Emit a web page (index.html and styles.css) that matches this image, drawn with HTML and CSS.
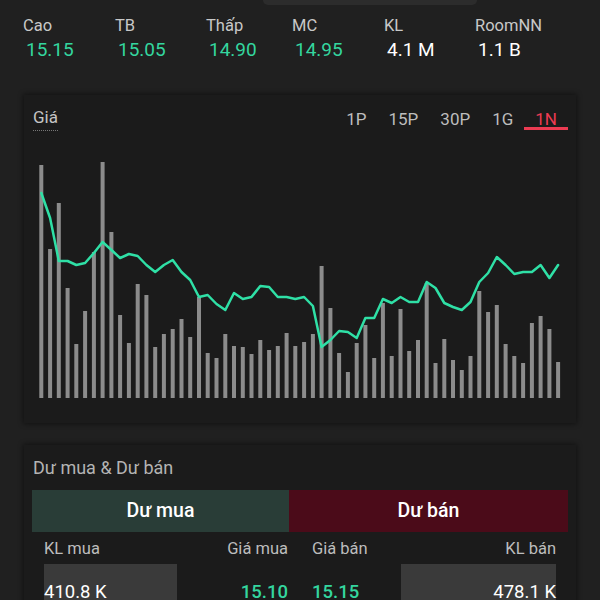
FILE: index.html
```html
<!DOCTYPE html>
<html lang="vi">
<head>
    <meta charset="UTF-8">
    <meta name="viewport" content="width=device-width, initial-scale=1.0">
    <title>Chi tiết mã</title>
    <link rel="stylesheet" href="styles.css">
</head>
<body>
    <div class="handle"></div>

    <div class="stats">
        <div class="stat"><div class="stat-label">Cao</div><div class="stat-value up">15.15</div></div>
        <div class="stat"><div class="stat-label">TB</div><div class="stat-value up">15.05</div></div>
        <div class="stat"><div class="stat-label">Thấp</div><div class="stat-value up">14.90</div></div>
        <div class="stat"><div class="stat-label">MC</div><div class="stat-value up">14.95</div></div>
        <div class="stat"><div class="stat-label">KL</div><div class="stat-value">4.1 M</div></div>
        <div class="stat"><div class="stat-label">RoomNN</div><div class="stat-value">1.1 B</div></div>
    </div>

    <div class="card chart-card">
        <div class="chart-header">
            <span class="chart-title">Giá</span>
            <div class="tabs">
                <span class="tab">1P</span>
                <span class="tab">15P</span>
                <span class="tab">30P</span>
                <span class="tab">1G</span>
                <span class="tab active">1N</span>
            </div>
        </div>
        <svg id="chart" class="chart" width="552" height="260" viewBox="0 0 552 260"></svg>
    </div>

    <div class="card book-card">
        <div class="book-title">Dư mua &amp; Dư bán</div>
        <div class="book-tabs">
            <div class="book-tab buy">Dư mua</div>
            <div class="book-tab sell">Dư bán</div>
        </div>
        <div class="book-grid">
            <div class="book-side">
                <span>KL mua</span>
                <span>Giá mua</span>
            </div>
            <div class="book-side">
                <span>Giá bán</span>
                <span>KL bán</span>
            </div>
        </div>
        <div class="book-grid book-row">
            <div class="book-side">
                <div class="depth bid" style="width: 133px"></div>
                <span class="vol">410.8 K</span>
                <span class="price up">15.10</span>
            </div>
            <div class="book-side">
                <div class="depth ask" style="width: 155px"></div>
                <span class="price up">15.15</span>
                <span class="vol">478.1 K</span>
            </div>
        </div>
    </div>

    <script>
        // bar tops and close prices, in screen px of the original chart
        const volTops = [165,249,203,288,344,311,252,162,232,315,343,284,295,347,334,329,319,337,297,353,
                         358,334,346,347,354,340,350,346,333,346,342,334,266,308,353,372,343,325,358,303,
                         356,309,351,340,283,363,339,360,370,356,291,312,305,344,356,363,323,316,329,362];
        const prices = [193,218,261,261,265,263,253,242,250,258,254,256,265,272,265,260,272,280,297,295,
                        304,310,293,299,297,286,287,297,297,299,297,306,347,340,331,332,338,318,318,299,
                        303,297,302,302,282,288,303,307,310,302,282,273,257,265,274,272,272,265,278,265];

        function drawChart() {
            const svg = document.getElementById('chart');
            const step = 8.76;
            const bottom = 248;
            let bars = '';
            volTops.forEach((top, i) => {
                const x = 15.3 + i * step;
                const y = top - 150;
                bars += `<rect x="${x.toFixed(1)}" y="${y}" width="4" height="${bottom - y}" fill="#8c8c8c"/>`;
            });
            const points = prices.map((p, i) => `${(17.3 + i * step).toFixed(1)},${p - 150}`).join(' ');
            svg.innerHTML = bars +
                `<polyline points="${points}" fill="none" stroke="#2fe0a6" stroke-width="2.5" stroke-linejoin="round" stroke-linecap="round"/>`;
        }

        document.addEventListener('DOMContentLoaded', drawChart);
    </script>
</body>
</html>
```

FILE: styles.css
```css
body {
    margin: 0;
    background-color: #202020;
    font-family: Roboto, "Noto Sans", sans-serif;
    color: #fff;
}
.handle {
    width: 214px;
    height: 5px;
    margin-left: 263px;
    background-color: #2c2c2c;
    border-radius: 0 0 6px 6px;
}
.up {
    color: #34d69f;
}

.stats {
    display: grid;
    grid-template-columns: 92px 91px 86px 92px 91px 1fr;
    padding-left: 23px;
    margin-top: 11px;
}
.stat-label {
    font-size: 16.5px;
    line-height: 20px;
    color: #c8c8c8;
}
.stat-value {
    font-size: 19px;
    line-height: 24px;
    margin-top: 2px;
    padding-left: 3px;
}

.card {
    margin: 0 24px;
    background-color: #1b1b1b;
    box-shadow: 0 0 5px 1px rgba(0, 0, 0, 0.45);
}
.chart-card {
    margin-top: 33px;
    padding: 12px 0 13px;
}
.chart-header {
    display: flex;
    justify-content: space-between;
    align-items: flex-start;
    padding: 0 8px 0 9px;
    height: 23px;
}
.chart-title {
    font-size: 17px;
    line-height: 21px;
    color: #c4c4c4;
    padding-bottom: 2px;
    border-bottom: 1px dotted #777;
}
.tabs {
    display: flex;
}
.tab {
    padding: 4px 11px 0;
    font-size: 17px;
    line-height: 16px;
    color: #bdbdbd;
    border-bottom: 3px solid transparent;
}
.tab.active {
    color: #ec3b52;
    border-bottom-color: #ec3b52;
}
.chart {
    display: block;
    margin-top: 20px;
}

.book-card {
    margin-top: 22px;
    padding: 12px 8px 0;
}
.book-title {
    font-size: 18px;
    line-height: 22px;
    color: #b4b4b4;
    padding-left: 1px;
}
.book-tabs {
    display: grid;
    grid-template-columns: 257px 1fr;
    margin-top: 11px;
}
.book-tab {
    height: 42px;
    line-height: 42px;
    text-align: center;
    font-size: 19.5px;
    font-weight: 500;
}
.book-tab.buy {
    background-color: #293d37;
}
.book-tab.sell {
    background-color: #4b0b19;
}
.book-grid {
    display: grid;
    grid-template-columns: 1fr 1fr;
    column-gap: 24px;
    padding: 0 12px;
    margin-top: 6px;
}
.book-side {
    display: flex;
    justify-content: space-between;
    position: relative;
    font-size: 16.5px;
    line-height: 22px;
    color: #bdbdbd;
}
.book-row {
    margin-top: 4px;
}
.book-row .book-side {
    height: 56px;
    line-height: 56px;
    font-size: 18.5px;
    color: #fff;
}
.book-row .book-side span {
    position: relative;
}
.depth {
    position: absolute;
    top: 0;
    bottom: 0;
    background-color: #3a3a3a;
}
.depth.bid {
    left: 0;
}
.depth.ask {
    right: 0;
}
.price {
    font-weight: 500;
}
```
